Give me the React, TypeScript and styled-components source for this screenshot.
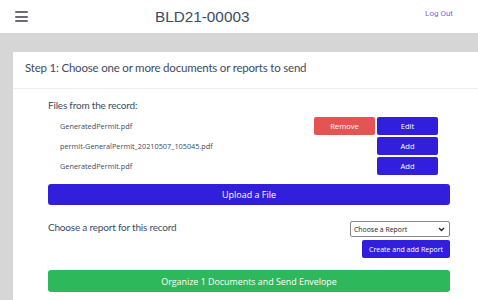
import React from "react";
import styled, { createGlobalStyle } from "styled-components";

const Global = createGlobalStyle`
  html, body { margin: 0; padding: 0; background: #d6d6d6; }
  body { font-family: "Open Sans", "DejaVu Sans", sans-serif; color: #3c4b64; overflow: hidden; }
  * { box-sizing: border-box; }
`;

const Page = styled.div`
  width: 478px;
  height: 300px;
  background: #d6d6d6;
  overflow: hidden;
`;

const Header = styled.header`
  height: 33px;
  background: #fff;
  display: flex;
  align-items: center;
  padding: 0 15px;
`;

const Burger = styled.button`
  width: 13px;
  height: 11px;
  padding: 0;
  border: 0;
  background: none;
  display: flex;
  flex-direction: column;
  justify-content: space-between;
  span {
    display: block;
    height: 2px;
    background: #6b6b73;
    border-radius: 1px;
  }
`;

const Title = styled.h1`
  margin: 0 0 0 127px;
  font-family: "Liberation Sans", Arial, sans-serif;
  font-weight: 400;
  font-size: 15.3px;
  color: #3c4b64;
`;

const LogOut = styled.a`
  margin-left: auto;
  margin-right: 10px;
  margin-top: -7px;
  font-family: Roboto, "Open Sans", sans-serif;
  font-size: 8px;
  color: #7469ee;
  text-decoration: none;
`;

const Card = styled.section`
  margin: 19px 0 0 13px;
  background: #fff;
  height: 260px;
`;

const CardHeader = styled.div`
  height: 37px;
  border-bottom: 1px solid #eceef1;
  display: flex;
  align-items: center;
  padding: 0 12px 6px;
  font-family: Lato, "Open Sans", sans-serif;
  font-size: 11.5px;
  letter-spacing: -0.2px;
  color: #3c4b64;
`;

const CardBody = styled.div`
  padding: 9px 28px 0 35px;
  display: flex;
  flex-direction: column;
`;

const Label = styled.div`
  font-family: Lato, "Open Sans", sans-serif;
  font-size: 10px;
  letter-spacing: -0.2px;
  color: #3c4b64;
  line-height: 14px;
`;

const FileList = styled.div`
  margin: 5px 12px 0 12px;
  display: flex;
  flex-direction: column;
  gap: 2px;
`;

const FileRow = styled.div`
  display: flex;
  align-items: center;
  height: 18px;
`;

const FileName = styled.span`
  font-family: "Open Sans", sans-serif;
  font-size: 7.3px;
  color: #3c4b64;
  flex: 1;
`;

const Btn = styled.button<{ $variant?: "primary" | "danger" | "success" }>`
  font-family: "Open Sans", sans-serif;
  font-size: 7.6px;
  color: #fff;
  border: 0;
  border-radius: 2px;
  padding: 0;
  height: 18px;
  width: 61px;
  background: ${(p) =>
    p.$variant === "danger" ? "#e55353" : p.$variant === "success" ? "#2eb85c" : "#321fdb"};
  cursor: pointer;
`;

const Buttons = styled.div`
  display: flex;
  gap: 2px;
`;

const WideBtn = styled(Btn)`
  width: 100%;
  height: 21px;
  font-size: 9px;
  border-radius: 3px;
`;

const UploadBtn = styled(WideBtn)`
  margin-top: 9px;
`;

const ReportRow = styled.div`
  display: flex;
  justify-content: space-between;
  margin-top: 16px;
`;

const ReportLabel = styled(Label)`
  margin-top: -1px;
`;

const ReportControls = styled.div`
  display: flex;
  flex-direction: column;
  align-items: flex-end;
  gap: 3px;
`;

const Select = styled.div`
  width: 100px;
  height: 16px;
  border: 1px solid #8a8a8a;
  border-radius: 2px;
  display: flex;
  align-items: center;
  justify-content: space-between;
  padding: 0 4px 0 3px;
  font-family: "Open Sans", sans-serif;
  font-size: 6.9px;
  color: #222;
  background: #fff;
`;

const CreateBtn = styled(Btn)`
  width: 88px;
  font-size: 7px;
`;

const SendBtn = styled(WideBtn)`
  margin-top: 12px;
  height: 22px;
  font-size: 8.9px;
`;

const files = [
  { name: "GeneratedPermit.pdf", added: true },
  { name: "permit-GeneralPermit_20210507_105045.pdf", added: false },
  { name: "GeneratedPermit.pdf", added: false },
];

export default function App() {
  return (
    <Page>
      <Global />
      <Header>
        <Burger aria-label="menu">
          <span />
          <span />
          <span />
        </Burger>
        <Title>BLD21-00003</Title>
        <LogOut href="#">Log Out</LogOut>
      </Header>
      <Card>
        <CardHeader>Step 1: Choose one or more documents or reports to send</CardHeader>
        <CardBody>
          <Label>Files from the record:</Label>
          <FileList>
            {files.map((f, i) => (
              <FileRow key={i}>
                <FileName>{f.name}</FileName>
                <Buttons>
                  {f.added && <Btn $variant="danger">Remove</Btn>}
                  <Btn>{f.added ? "Edit" : "Add"}</Btn>
                </Buttons>
              </FileRow>
            ))}
          </FileList>
          <UploadBtn>Upload a File</UploadBtn>
          <ReportRow>
            <ReportLabel>Choose a report for this record</ReportLabel>
            <ReportControls>
              <Select>
                <span>Choose a Report</span>
                <svg width="7" height="5" viewBox="0 0 7 5">
                  <path d="M1 1 L3.5 3.5 L6 1" stroke="#222" strokeWidth="1.4" fill="none" />
                </svg>
              </Select>
              <CreateBtn>Create and add Report</CreateBtn>
            </ReportControls>
          </ReportRow>
          <SendBtn $variant="success">Organize 1 Documents and Send Envelope</SendBtn>
        </CardBody>
      </Card>
    </Page>
  );
}
